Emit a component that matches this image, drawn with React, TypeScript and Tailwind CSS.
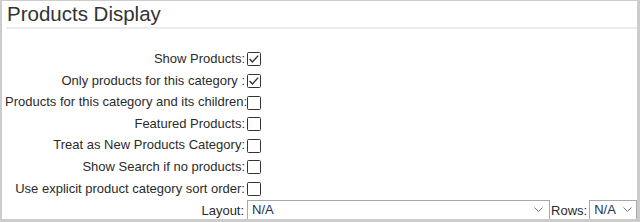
import React from "react";

function Check({ checked }: { checked: boolean }) {
  return (
    <svg width="14" height="14" viewBox="0 0 14 14" className="ml-[2px] mt-[2px] shrink-0">
      <rect x="0.5" y="0.5" width="13" height="13" rx="1" fill="#fff" stroke="#333" strokeWidth="1" />
      {checked && (
        <polyline points="2.6,7 5.4,10 11.2,3.6" fill="none" stroke="#333" strokeWidth="1.4" />
      )}
    </svg>
  );
}

function Chevron() {
  return (
    <svg width="9" height="5" viewBox="0 0 9 5" className="shrink-0">
      <polyline points="0.5,0.5 4.5,4.5 8.5,0.5" fill="none" stroke="#777" strokeWidth="1" />
    </svg>
  );
}

const rows: [string, boolean][] = [
  ["Show Products:", true],
  ["Only products for this category :", true],
  ["Products for this category and its children:", false],
  ["Featured Products:", false],
  ["Treat as New Products Category:", false],
  ["Show Search if no products:", false],
  ["Use explicit product category sort order:", false],
];

export default function App() {
  return (
    <div className="w-[640px] h-[222px] overflow-hidden bg-white border-[#cccccc] border-t border-l-2 border-r-[3px] border-b-[3px] font-['Liberation_Sans',Arial,sans-serif] text-[#2b2b2b]">
      <div className="pl-[5px] pt-[1px]">
        <h1 className="text-[20.5px] leading-[24px] text-[#333]">Products Display</h1>
      </div>
      <div className="ml-[4px] mt-[1px] h-[2px] bg-[#ececec]" />
      <div className="pl-[3px] mt-[18.7px] text-[13px] leading-[15px]">
        {rows.map(([label, checked]) => (
          <div key={label} className="flex items-center h-[21.6px]">
            <div className="w-[240px] text-right whitespace-nowrap">{label}</div>
            <Check checked={checked} />
          </div>
        ))}
        <div className="flex items-start h-[22px] pt-[1px]">
          <div className="w-[240px] text-right whitespace-nowrap pt-[3px]">Layout:</div>
          <div className="ml-[3px] w-[304px] h-[20px] border border-[#a9a9a9] flex items-center pl-[4px] pr-[6px] text-[#223355]">
            <span className="flex-1">N/A</span>
            <Chevron />
          </div>
          <div className="ml-[1px] pt-[3px] whitespace-nowrap">Rows:</div>
          <div className="ml-[2px] w-[48px] h-[20px] border border-[#a9a9a9] flex items-center pl-[4px] pr-[4px] text-[#223355]">
            <span className="flex-1">N/A</span>
            <Chevron />
          </div>
        </div>
      </div>
    </div>
  );
}
